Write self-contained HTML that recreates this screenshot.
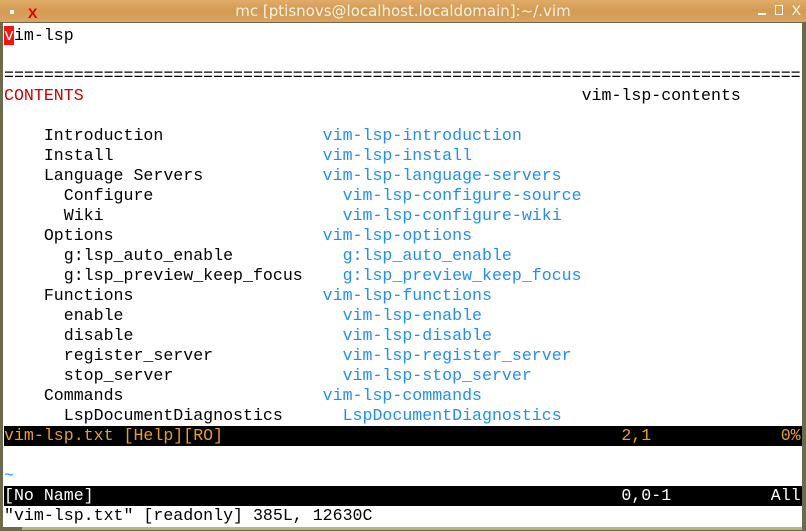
<!DOCTYPE html>
<html><head><meta charset="utf-8"><style>
html,body{margin:0;padding:0;width:806px;height:531px;overflow:hidden;background:#6b6b4c;}
#title{position:absolute;left:0;top:0;width:806px;height:22px;background:linear-gradient(180deg,#e0ac68,#d39a52 50%,#dba463);border-bottom:1px solid #6b6b4c;}
#title .t{position:absolute;left:0;width:806px;top:2px;text-align:center;font:15px "DejaVu Sans","Liberation Sans",sans-serif;color:#fff3e0;}
#term{position:absolute;left:3px;top:23px;width:799px;height:504px;background:#fff;overflow:hidden;}
#bot{position:absolute;left:22px;top:527px;width:780px;height:3px;background:#a8c070;}
pre{margin:0;position:absolute;left:1px;top:3px;font:16.6px/20px "Liberation Mono",monospace;color:#000;}
.r{color:#d00000}.b{color:#1e8fff}
.bar{display:inline-block;width:800px;background:#000;}
.y{color:#e8a020}.w{color:#fff}
.cur{background:#ff1010;color:#fff}
</style></head><body>
<div id="title"><div style="position:absolute;left:10px;top:10px;width:4px;height:4px;background:#fff"></div>
<div style="position:absolute;left:28px;top:5px;color:#d00;font:bold 14px 'Liberation Sans';">X</div>
<div class="t">mc [ptisnovs@localhost.localdomain]:~/.vim</div>
<div style="position:absolute;right:40px;top:13px;width:8px;height:2px;background:#fff"></div>
<div style="position:absolute;right:23px;top:5px;width:8px;height:10px;border:1px solid #fff;box-sizing:border-box"></div>
<div style="position:absolute;right:5px;top:2px;color:#fff;font:14px 'Liberation Sans'">X</div>
</div>
<div id="term"><pre><span class="cur">v</span>im-lsp

================================================================================
<span class="r">CONTENTS</span>                                                  vim-lsp-contents

    Introduction                <span class="b">vim-lsp-introduction</span>
    Install                     <span class="b">vim-lsp-install</span>
    Language Servers            <span class="b">vim-lsp-language-servers</span>
      Configure                   <span class="b">vim-lsp-configure-source</span>
      Wiki                        <span class="b">vim-lsp-configure-wiki</span>
    Options                     <span class="b">vim-lsp-options</span>
      g:lsp_auto_enable           <span class="b">g:lsp_auto_enable</span>
      g:lsp_preview_keep_focus    <span class="b">g:lsp_preview_keep_focus</span>
    Functions                   <span class="b">vim-lsp-functions</span>
      enable                      <span class="b">vim-lsp-enable</span>
      disable                     <span class="b">vim-lsp-disable</span>
      register_server             <span class="b">vim-lsp-register_server</span>
      stop_server                 <span class="b">vim-lsp-stop_server</span>
    Commands                    <span class="b">vim-lsp-commands</span>
      LspDocumentDiagnostics      <span class="b">LspDocumentDiagnostics</span>
<span class="bar y">vim-lsp.txt [Help][RO]                                        2,1             0%</span>

<span class="b">~</span>
<span class="bar w">[No Name]                                                     0,0-1          All</span>
"vim-lsp.txt" [readonly] 385L, 12630C</pre></div>
<div id="bot"></div>
</body></html>
